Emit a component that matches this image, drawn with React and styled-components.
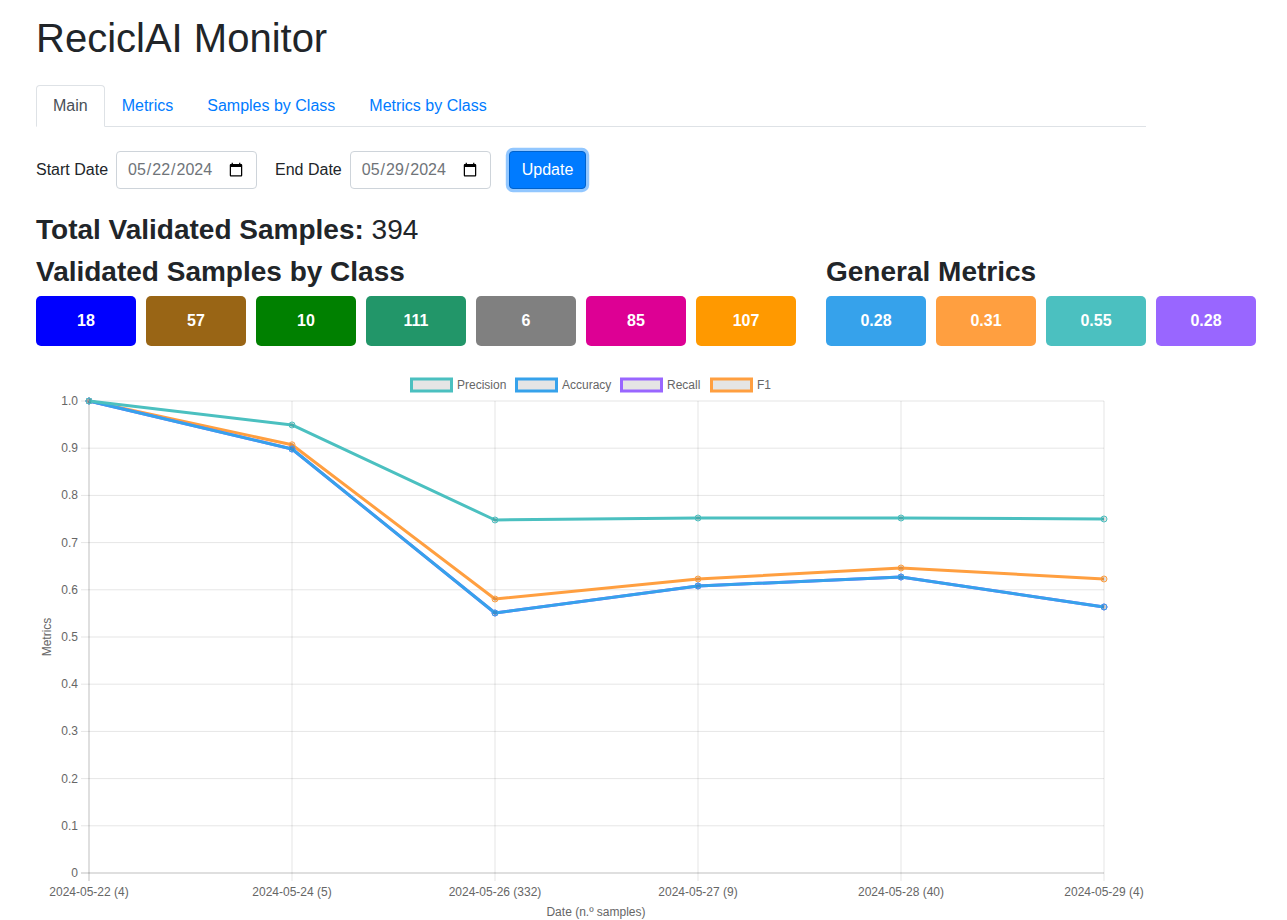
import React from "react";
import styled, { createGlobalStyle } from "styled-components";

const GlobalStyle = createGlobalStyle`
  body {
    margin: 0;
    font-family: "Liberation Sans", Arial, sans-serif;
    color: #212529;
    background: #fff;
  }
`;

const Page = styled.div`
  margin-left: 36px;
  width: 1110px;
`;

const Title = styled.h1`
  font-size: 40px;
  font-weight: 500;
  line-height: 1.2;
  margin: 14px 0 23px;
`;

const Tabs = styled.div`
  display: flex;
  border-bottom: 1px solid #dee2e6;
`;

const Tab = styled.a`
  display: block;
  padding: 8px 16px;
  font-size: 16px;
  line-height: 24px;
  margin-bottom: -1px;
  border: 1px solid transparent;
  border-color: ${(p) => (p.$active ? "#dee2e6 #dee2e6 #fff" : "transparent")};
  border-radius: 4px 4px 0 0;
  background: ${(p) => (p.$active ? "#fff" : "transparent")};
  color: ${(p) => (p.$active ? "#495057" : "#007bff")};
  cursor: pointer;
`;

const FilterRow = styled.div`
  display: flex;
  align-items: center;
  margin-top: 24px;
  gap: 18px;
`;

const Field = styled.label`
  display: flex;
  align-items: center;
  gap: 8px;
  font-size: 16px;
`;

const DateInput = styled.input`
  box-sizing: border-box;
  width: 141px;
  height: 38px;
  padding: 6px 10px;
  font-family: inherit;
  font-size: 16px;
  color: #6f7479;
  border: 1px solid #ced4da;
  border-radius: 4px;
  background: #fff;
`;

const UpdateButton = styled.button`
  height: 38px;
  padding: 6px 12px;
  font-family: inherit;
  font-size: 16px;
  color: #fff;
  background: #007bff;
  border: 1px solid #0062cc;
  border-radius: 4px;
  box-shadow: 0 0 0 3.2px rgba(38, 143, 255, 0.5);
  cursor: pointer;
`;

const Heading = styled.h3`
  font-size: 28px;
  font-weight: 700;
  line-height: 1.2;
  margin: ${(p) => p.$top || 0}px 0 8px;
  white-space: nowrap;
`;

const Plain = styled.span`
  font-weight: 400;
`;

const StatsRow = styled.div`
  display: flex;
  gap: 30px;
`;

const Column = styled.div`
  flex-shrink: 0;
`;

const BoxRow = styled.div`
  display: flex;
  gap: 10px;
`;

const StatBox = styled.div`
  width: 100px;
  height: 50px;
  border-radius: 5px;
  background: ${(p) => p.$bg};
  color: #fff;
  font-weight: 700;
  font-size: 16px;
  display: flex;
  align-items: center;
  justify-content: center;
`;

const ChartWrap = styled.div`
  margin-top: 20px;
  width: 1110px;
  height: 554px;
`;

const classCounts = [
  { v: 18, c: "#0000ff" },
  { v: 57, c: "#996515" },
  { v: 10, c: "#008000" },
  { v: 111, c: "#229669" },
  { v: 6, c: "#808080" },
  { v: 85, c: "#dd0094" },
  { v: 107, c: "#ff9900" },
];

const general = [
  { v: "0.28", c: "#36a2eb" },
  { v: "0.31", c: "#ff9f40" },
  { v: "0.55", c: "#4bc0c0" },
  { v: "0.28", c: "#9966ff" },
];

const labels = [
  "2024-05-22 (4)",
  "2024-05-24 (5)",
  "2024-05-26 (332)",
  "2024-05-27 (9)",
  "2024-05-28 (40)",
  "2024-05-29 (4)",
];

const accuracy = [1, 0.8983, 0.5508, 0.6081, 0.6271, 0.5636];
const series = [
  { name: "Precision", color: "rgb(75,192,192)", data: [1, 0.9492, 0.7479, 0.7521, 0.7521, 0.75] },
  { name: "Accuracy", color: "rgb(54,162,235)", data: accuracy },
  { name: "Recall", color: "rgb(153,102,255)", data: accuracy },
  { name: "F1", color: "rgb(255,159,64)", data: [1, 0.9072, 0.5805, 0.6229, 0.6462, 0.6229] },
];

const legendX = [374, 479, 584, 674];

const X0 = 53;
const STEP = 203;
const xOf = (i) => X0 + i * STEP;
const yOf = (v) => 507 - v * 472;

const tickFont = { fontFamily: "Liberation Sans, Arial, sans-serif", fontSize: 12, fill: "#666" };

const LineChart = () => {
  const yTicks = Array.from({ length: 11 }, (_, i) => i / 10);
  return (
    <svg width="1110" height="554" viewBox="0 0 1110 554">
      {yTicks.map((t) => (
        <g key={t}>
          <line
            x1="45"
            x2="1068"
            y1={yOf(t)}
            y2={yOf(t)}
            stroke={t === 0 ? "rgba(0,0,0,0.25)" : "rgba(0,0,0,0.1)"}
            strokeWidth="1"
          />
          <text x="42" y={yOf(t) + 4} textAnchor="end" {...tickFont}>
            {t === 0 ? "0" : t.toFixed(1)}
          </text>
        </g>
      ))}
      {labels.map((l, i) => (
        <g key={l}>
          <line
            x1={xOf(i)}
            x2={xOf(i)}
            y1="35"
            y2="515"
            stroke={i === 0 ? "rgba(0,0,0,0.25)" : "rgba(0,0,0,0.1)"}
            strokeWidth="1"
          />
          <text x={xOf(i)} y="530" textAnchor="middle" {...tickFont}>
            {l}
          </text>
        </g>
      ))}
      <text x="560" y="550" textAnchor="middle" {...tickFont}>
        Date (n.º samples)
      </text>
      <text x="15" y="271" textAnchor="middle" transform="rotate(-90 15 271)" {...tickFont}>
        Metrics
      </text>

      {[...series].reverse().map((s) => (
        <g key={s.name}>
          <polyline
            points={s.data.map((v, i) => `${xOf(i)},${yOf(v)}`).join(" ")}
            fill="none"
            stroke={s.color}
            strokeWidth="3"
            strokeLinejoin="round"
          />
          {s.data.map((v, i) => (
            <circle
              key={i}
              cx={xOf(i)}
              cy={yOf(v)}
              r="3"
              fill="rgba(0,0,0,0.1)"
              stroke={s.color}
              strokeWidth="1"
            />
          ))}
        </g>
      ))}

      {series.map((s, i) => (
        <g key={s.name}>
          <rect
            x={legendX[i] + 1.5}
            y="13"
            width="40"
            height="12"
            fill="rgba(0,0,0,0.1)"
            stroke={s.color}
            strokeWidth="3"
          />
          <text x={legendX[i] + 47} y="23" {...tickFont}>
            {s.name}
          </text>
        </g>
      ))}
    </svg>
  );
};

const App = () => {
  return (
    <>
      <GlobalStyle />
      <Page>
        <Title>ReciclAI Monitor</Title>
        <Tabs>
          <Tab $active>Main</Tab>
          <Tab>Metrics</Tab>
          <Tab>Samples by Class</Tab>
          <Tab>Metrics by Class</Tab>
        </Tabs>
        <FilterRow>
          <Field>
            Start Date
            <DateInput type="date" defaultValue="2024-05-22" />
          </Field>
          <Field>
            End Date
            <DateInput type="date" defaultValue="2024-05-29" />
          </Field>
          <UpdateButton>Update</UpdateButton>
        </FilterRow>
        <Heading $top={24}>
          Total Validated Samples: <Plain>394</Plain>
        </Heading>
        <StatsRow>
          <Column>
            <Heading>Validated Samples by Class</Heading>
            <BoxRow>
              {classCounts.map((b, i) => (
                <StatBox key={i} $bg={b.c}>
                  {b.v}
                </StatBox>
              ))}
            </BoxRow>
          </Column>
          <Column>
            <Heading>General Metrics</Heading>
            <BoxRow>
              {general.map((b, i) => (
                <StatBox key={i} $bg={b.c}>
                  {b.v}
                </StatBox>
              ))}
            </BoxRow>
          </Column>
        </StatsRow>
        <ChartWrap>
          <LineChart />
        </ChartWrap>
      </Page>
    </>
  );
};

export default App;
